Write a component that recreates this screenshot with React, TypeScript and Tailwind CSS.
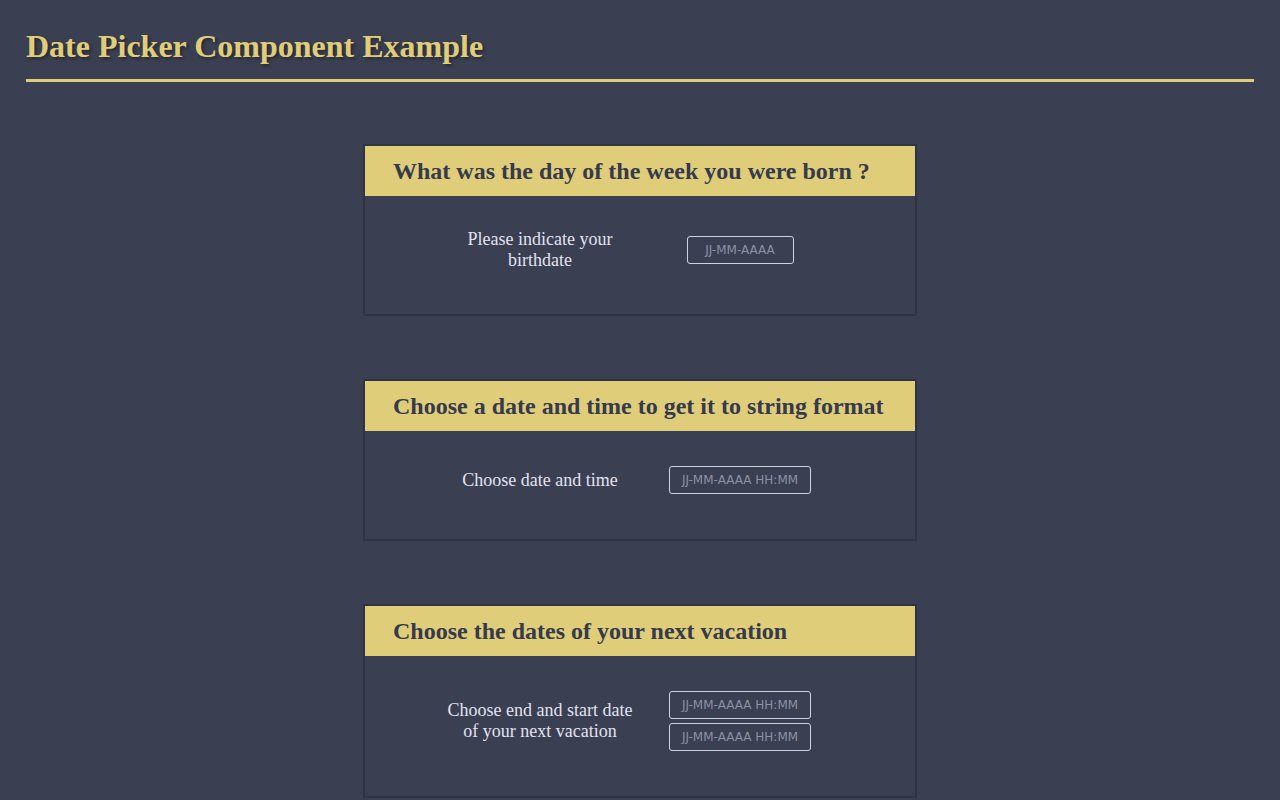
const serif = "font-['Liberation_Serif','Times_New_Roman',serif]"

type Field = { placeholder: string; width: string }

type Question = {
  title: string
  label: string
  fields: Field[]
}

const questions: Question[] = [
  {
    title: 'What was the day of the week you were born ?',
    label: 'Please indicate your birthdate',
    fields: [{ placeholder: 'JJ-MM-AAAA', width: 'w-[107px]' }],
  },
  {
    title: 'Choose a date and time to get it to string format',
    label: 'Choose date and time',
    fields: [{ placeholder: 'JJ-MM-AAAA HH:MM', width: 'w-[142px]' }],
  },
  {
    title: 'Choose the dates of your next vacation',
    label: 'Choose end and start date of your next vacation',
    fields: [
      { placeholder: 'JJ-MM-AAAA HH:MM', width: 'w-[142px]' },
      { placeholder: 'JJ-MM-AAAA HH:MM', width: 'w-[142px]' },
    ],
  },
]

function QuestionCard({ q }: { q: Question }) {
  return (
    <section className="w-[554px] border-2 border-[#2f3343] bg-[#3a3f51]">
      <h2
        className={`${serif} h-[50px] bg-[#e0cd7a] pl-[28px] text-[24px] font-bold leading-[50px] text-[#353a4c]`}
      >
        {q.title}
      </h2>
      <div className="flex items-center justify-center pt-[33px] pb-[43px]">
        <div className="grid w-[400px] grid-cols-2 items-center">
          <p className={`${serif} text-center text-[18px] leading-[21px] text-[#e2e2f2]`}>{q.label}</p>
          <div className="flex flex-col items-center">
            {q.fields.map((f, i) => (
              <input
                key={i}
                type="text"
                placeholder={f.placeholder}
                className={`${f.width} my-[2px] h-[28px] rounded-[3px] border border-[#cfd1e4] bg-transparent text-center font-['DejaVu_Sans',sans-serif] text-[12px] text-[#e2e2f2] outline-none placeholder:text-[#8d91a6]`}
              />
            ))}
          </div>
        </div>
      </div>
    </section>
  )
}

export default function App() {
  return (
    <div className="min-h-[800px] bg-[#3a3f51] px-[26px] pt-[27px]">
      <h1
        className={`${serif} text-[32px] font-bold leading-[38px] text-[#e0cd7a] [text-shadow:2px_2px_3px_rgba(0,0,0,0.35)]`}
      >
        Date Picker Component Example
      </h1>
      <div className="mt-[14px] h-[3px] bg-[#e0cd7a]" />
      <main className="flex flex-col items-center gap-[63px] pt-[62px] pb-[40px]">
        {questions.map((q) => (
          <QuestionCard key={q.title} q={q} />
        ))}
      </main>
    </div>
  )
}
